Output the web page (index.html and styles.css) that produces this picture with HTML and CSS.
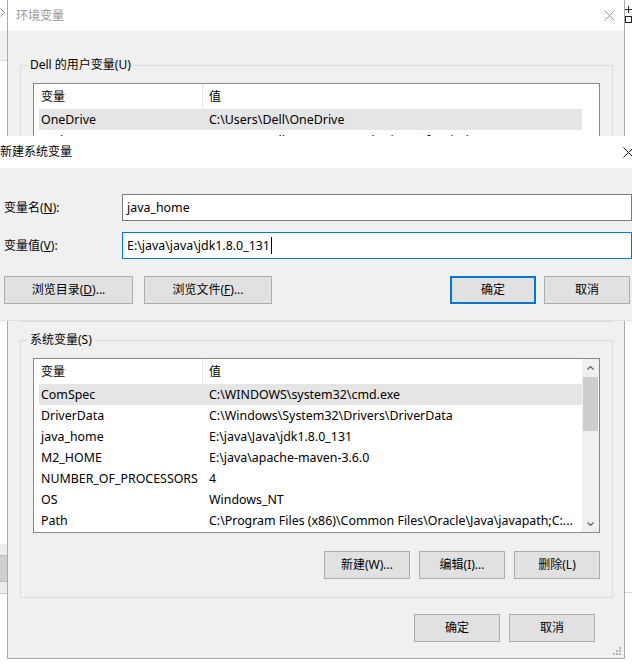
FILE: index.html
```html
<!DOCTYPE html>
<html lang="zh-CN">
<head>
<meta charset="utf-8">
<title>环境变量</title>
<link rel="stylesheet" href="styles.css">
</head>
<body>
<div class="desk desk-lt">
  <svg class="desk-chev" width="5" height="9" viewBox="0 0 5 9"><polyline points="0.5,0.5 4.5,4.5 0.5,8.5" fill="none" stroke="#8a8a8a" stroke-width="1"/></svg>
</div>
<div class="desk desk-rt">
  <svg width="7" height="20" viewBox="0 0 7 20"><path d="M3.5 3v7M0 6.5h7" stroke="#222" stroke-width="1" fill="none"/><rect x="0.5" y="13.5" width="6" height="6" fill="none" stroke="#222" stroke-width="1"/></svg>
</div>
<div class="desk desk-lb"><div class="desk-lb-btn"></div></div>
<div class="desk desk-rb"></div>

<section class="env">
  <header class="env-title">
    <span>环境变量</span>
    <svg class="x-icon" width="11" height="11" viewBox="0 0 11 11"><path d="M0.5 0.5l10 10M10.5 0.5l-10 10" stroke="#9a9a9a" stroke-width="1" fill="none"/></svg>
  </header>
  <div class="env-body">
    <fieldset class="group group-user">
      <legend>Dell 的用户变量(U)</legend>
      <div class="listview">
        <div class="lv-main">
          <div class="lv-row lv-head"><span class="c1">变量</span><span class="c2">值</span></div>
          <div class="lv-row sel"><span class="c1">OneDrive</span><span class="c2">C:\Users\Dell\OneDrive</span></div>
          <div class="lv-row"><span class="c1">Path</span><span class="c2">C:\Users\Dell\AppData\Local\Microsoft\WindowsApps;C:...</span></div>
        </div>
        <div class="lv-sb blank"></div>
      </div>
    </fieldset>

    <fieldset class="group group-sys">
      <legend>系统变量(S)</legend>
      <div class="listview">
        <div class="lv-main">
          <div class="lv-row lv-head"><span class="c1">变量</span><span class="c2">值</span></div>
          <div class="lv-row sel"><span class="c1">ComSpec</span><span class="c2">C:\WINDOWS\system32\cmd.exe</span></div>
          <div class="lv-row"><span class="c1">DriverData</span><span class="c2">C:\Windows\System32\Drivers\DriverData</span></div>
          <div class="lv-row"><span class="c1">java_home</span><span class="c2">E:\java\Java\jdk1.8.0_131</span></div>
          <div class="lv-row"><span class="c1">M2_HOME</span><span class="c2">E:\java\apache-maven-3.6.0</span></div>
          <div class="lv-row"><span class="c1">NUMBER_OF_PROCESSORS</span><span class="c2">4</span></div>
          <div class="lv-row"><span class="c1">OS</span><span class="c2">Windows_NT</span></div>
          <div class="lv-row"><span class="c1">Path</span><span class="c2">C:\Program Files (x86)\Common Files\Oracle\Java\javapath;C:...</span></div>
        </div>
        <div class="lv-sb">
          <span class="sb-arrow"><svg width="7" height="4" viewBox="0 0 7 4"><polyline points="0.5,3.5 3.5,0.5 6.5,3.5" fill="none" stroke="#606060" stroke-width="1.2"/></svg></span>
          <span class="sb-thumb"></span>
          <span class="sb-track"></span>
          <span class="sb-arrow"><svg width="7" height="4" viewBox="0 0 7 4"><polyline points="0.5,0.5 3.5,3.5 6.5,0.5" fill="none" stroke="#606060" stroke-width="1.2"/></svg></span>
        </div>
      </div>
      <div class="btn-row">
        <button class="btn">新建(W)...</button>
        <button class="btn">编辑(I)...</button>
        <button class="btn">删除(L)</button>
      </div>
    </fieldset>

    <div class="btn-row dialog-btns">
      <button class="btn">确定</button>
      <button class="btn">取消</button>
    </div>
    <svg class="grip" width="8" height="8" viewBox="0 0 8 8" fill="#b5b5b5"><rect x="6" y="0" width="2" height="2"/><rect x="3" y="3" width="2" height="2"/><rect x="6" y="3" width="2" height="2"/><rect x="0" y="6" width="2" height="2"/><rect x="3" y="6" width="2" height="2"/><rect x="6" y="6" width="2" height="2"/></svg>
  </div>
</section>

<section class="nd">
  <header class="nd-title">
    <span>新建系统变量</span>
    <svg class="x-icon nd-x" width="11" height="11" viewBox="0 0 11 11"><path d="M0.5 0.5l10 10M10.5 0.5l-10 10" stroke="#111" stroke-width="1" fill="none"/></svg>
  </header>
  <div class="nd-body">
    <div class="nd-grid">
      <span class="nd-label">变量名(<u>N</u>):</span>
      <div class="field">java_home</div>
      <span class="nd-label">变量值(<u>V</u>):</span>
      <div class="field focus">E:\java\java\jdk1.8.0_131<span class="caret"></span></div>
    </div>
    <div class="nd-btns">
      <div class="nd-btns-left">
        <button class="btn btn-dir">浏览目录(<u>D</u>)...</button>
        <button class="btn btn-file">浏览文件(<u>F</u>)...</button>
      </div>
      <div class="nd-btns-right">
        <button class="btn btn-default">确定</button>
        <button class="btn">取消</button>
      </div>
    </div>
  </div>
</section>
</body>
</html>
```
FILE: styles.css
```css
* { box-sizing: border-box; }

html, body { margin: 0; padding: 0; }

body {
  width: 632px;
  height: 666px;
  overflow: hidden;
  position: relative;
  background: #fff;
  color: #000;
  font-family: "Noto Sans", "Noto Sans CJK SC", sans-serif;
  font-size: 12px;
  line-height: 16px;
}

/* ---------- desktop remnants around the dialogs ---------- */
.desk { position: absolute; }

.desk-lt {
  left: 0;
  top: 0;
  width: 7px;
  height: 61px;
  background: linear-gradient(#fff 0 31px, #f0f0f0 31px);
  border-bottom: 1px solid #d9d9d9;
}
.desk-chev { display: block; margin: 8px 0 0 0; }

.desk-rt {
  left: 625px;
  top: 3px;
  width: 7px;
  height: 20px;
}
.desk-rt svg { display: block; }

.desk-lb {
  left: 0;
  top: 544px;
  width: 7px;
  height: 50px;
  background: #ececec;
  border-bottom: 1px solid #c9c9c9;
  padding-top: 11px;
}
.desk-lb-btn {
  height: 27px;
  background: #d0d0d0;
  border-top: 1px solid #bdbdbd;
  border-bottom: 1px solid #bdbdbd;
}

.desk-rb {
  left: 625px;
  top: 592px;
  width: 7px;
  height: 1px;
  background: #dcdcdc;
}

/* ---------- background dialog: 环境变量 ---------- */
.env {
  position: absolute;
  left: 7px;
  top: -1px;
  width: 618px;
  height: 660px;
  border: 1px solid #ababab;
  background: #f0f0f0;
  display: flex;
  flex-direction: column;
}

.env-title {
  height: 31px;
  flex: none;
  background: #fff;
  color: #999;
  display: flex;
  align-items: center;
  justify-content: space-between;
  padding: 0 9px 0 8px;
}

.x-icon { display: block; }

.env-body {
  flex: 1;
  position: relative;
  padding: 26px 11px 0 12px;
  display: flex;
  flex-direction: column;
}

.group {
  margin: 0;
  padding: 0 0 18px;
  border: 1px solid #dcdcdc;
  min-width: 0;
}
.group-user { padding-bottom: 63px; }
.group-sys { margin-top: 10px; }

.group legend {
  margin-left: 6px;
  padding: 0 3px;
  line-height: 16px;
}

.listview {
  margin: 10px 12px 0;
  height: 175px;
  border: 1px solid #828790;
  background: #fff;
  display: flex;
  overflow: hidden;
}

.lv-main {
  flex: 1;
  min-width: 0;
  padding-left: 5px;
}

.lv-row {
  display: flex;
  align-items: center;
  height: 21px;
  white-space: nowrap;
  font-size: 12.4px;
}
.lv-head { height: 25px; font-size: 12px; }
.lv-row.sel { background: #e5e5e5; }

.c1 {
  flex: none;
  width: 164px;
  padding-left: 2px;
  overflow: hidden;
}
.c2 {
  flex: 1;
  min-width: 0;
  padding-left: 6px;
  overflow: hidden;
}
.lv-head .c1 {
  align-self: stretch;
  display: flex;
  align-items: center;
  border-right: 1px solid #e5e5e5;
}

.lv-sb {
  flex: none;
  width: 17px;
  background: #f0f0f0;
  display: flex;
  flex-direction: column;
}
.lv-sb.blank { background: #fff; }

.sb-arrow {
  height: 17px;
  flex: none;
  display: flex;
  align-items: center;
  justify-content: center;
}
.sb-arrow svg { display: block; }
.sb-thumb {
  height: 54px;
  margin: 1px 1px 0;
  background: #cdcdcd;
  flex: none;
}
.sb-track { flex: 1; }

.btn {
  width: 86px;
  height: 28px;
  margin: 0;
  padding: 0;
  border: 1px solid #adadad;
  background: #e1e1e1;
  color: #000;
  font: inherit;
  line-height: 16px;
  display: flex;
  align-items: center;
  justify-content: center;
  white-space: nowrap;
}

.btn-row {
  display: flex;
  justify-content: flex-end;
  gap: 9px;
  margin: 18px 12px 0;
}

.dialog-btns {
  margin: 16px 18px 0 0;
}

.grip {
  position: absolute;
  right: 3px;
  bottom: 3px;
}

/* ---------- foreground dialog: 新建系统变量 ---------- */
.nd {
  position: absolute;
  left: 0;
  top: 136px;
  width: 632px;
  height: 184px;
  background: #f0f0f0;
  box-shadow: 0 1px 0 #e2e2e2;
}

.nd-title {
  height: 32px;
  background: #fff;
  display: flex;
  align-items: center;
  justify-content: space-between;
}
.nd-x { margin-right: -2px; }

.nd-body {
  padding: 26px 0 0 4px;
}

.nd-grid {
  display: grid;
  grid-template-columns: 118px 1fr;
  row-gap: 11px;
  align-items: center;
}

.field {
  height: 27px;
  border: 1px solid #7a7a7a;
  background: #fff;
  padding-left: 4px;
  display: flex;
  align-items: center;
  white-space: nowrap;
  font-size: 12.4px;
}
.field.focus { border-color: #0078d7; }

.caret {
  display: inline-block;
  width: 1px;
  height: 17px;
  margin-left: 1px;
  background: #000;
}

.nd-btns {
  display: flex;
  justify-content: space-between;
  margin: 17px 2px 0 0;
}
.nd-btns-left { display: flex; gap: 11px; }
.nd-btns-right { display: flex; gap: 8px; }

.btn-dir { width: 129px; }
.btn-file { width: 128px; }
.btn-default { border: 2px solid #0078d7; }
```
